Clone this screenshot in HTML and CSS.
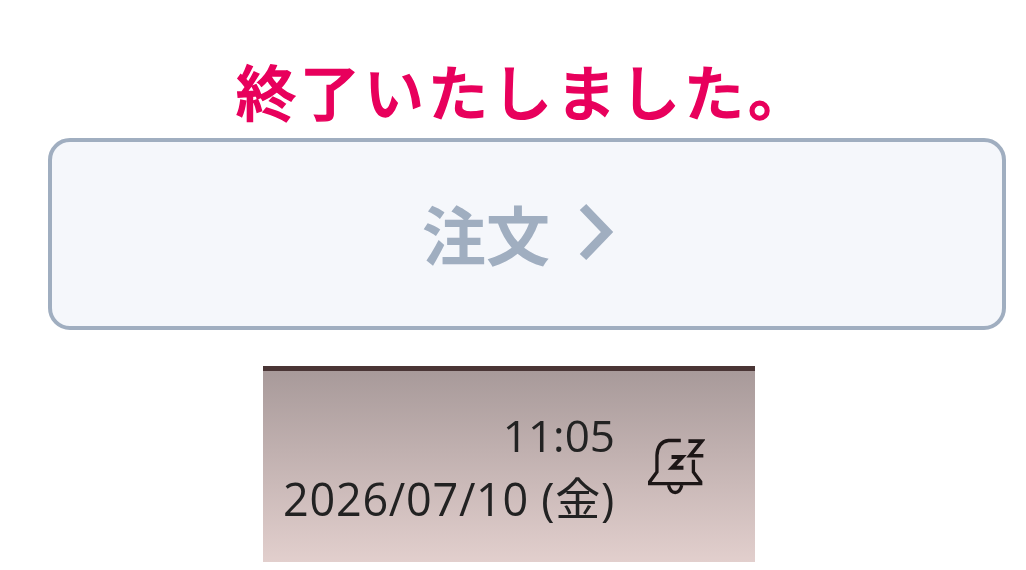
FILE: index.html

```html
<!DOCTYPE html>
<html lang="ja">
<head>
    <meta charset="UTF-8">
    <meta name="viewport" content="width=device-width, initial-scale=1.0">
    <title>注文</title>
    <link rel="stylesheet" href="styles.css">
</head>
<body>
    <p class="closed-msg">終了いたしました。</p>

    <!-- Order button (disabled) -->
    <button class="order-btn" disabled>
        <span class="order-label">注文</span>
        <svg class="chevron" viewBox="0 0 36 60" width="36" height="60" aria-hidden="true">
            <path d="M5 5 L29 30 L5 55" fill="none" stroke="currentColor" stroke-width="9"/>
        </svg>
    </button>

    <!-- Taskbar clock -->
    <div class="taskbar">
        <div class="clock">
            <div class="clock-time">11:05</div>
            <div class="clock-date">2026/07/10 (金)</div>
        </div>
        <svg class="bell" viewBox="20 20 175 180" width="58" height="60" aria-hidden="true">
            <g fill="none" stroke="#1c1616" stroke-width="10">
                <path d="M122 30 H85 Q52 34 50 75 V125 L28 155 V160 H182 V155 L160 125 V88"/>
                <path d="M85 165 Q90 187 105 187 Q120 187 125 165"/>
                <path d="M145 32 H185 L150 76 H190" stroke-width="11"/>
                <path d="M94 80 H126 L96 112 H130" stroke-width="12"/>
            </g>
        </svg>
    </div>
</body>
</html>
```

FILE: styles.css

```css
body {
    margin: 0;
    background: #fff;
    font-family: "Noto Sans CJK JP", "Open Sans", sans-serif;
}
.closed-msg {
    margin: 0 0 0 236px;
    height: 138px;
    padding-top: 51px;
    box-sizing: border-box;
    font-size: 60px;
    line-height: 78px;
    font-weight: 500;
    -webkit-text-stroke: 1.5px #e8005c;
    letter-spacing: 4px;
    color: #e8005c;
    white-space: nowrap;
    filter: blur(0.6px);
}
.order-btn {
    display: flex;
    align-items: center;
    justify-content: center;
    gap: 28px;
    width: 958px;
    height: 192px;
    margin-left: 48px;
    padding: 0 18px 4px 0;
    box-sizing: border-box;
    background: #f5f7fb;
    border: 4px solid #a0aec0;
    border-radius: 22px;
    color: #a0aec0;
    font-family: inherit;
    font-size: 64px;
    font-weight: 700;
}
.order-label {
    filter: blur(0.7px);
}
.chevron {
    display: block;
    filter: blur(0.7px);
}
.taskbar {
    display: flex;
    align-items: flex-start;
    width: 492px;
    height: 196px;
    margin: 36px 0 0 263px;
    box-sizing: border-box;
    border-top: 5px solid #4a3535;
    background: linear-gradient(#a89a9a, #e2cfcd);
    color: #222;
}
.clock {
    width: 352px;
    padding-top: 32px;
    font-family: "Open Sans", "Noto Sans CJK JP", sans-serif;
    font-size: 45px;
    line-height: 64px;
    text-align: right;
    white-space: nowrap;
    filter: blur(0.6px);
}
.clock-time {
    font-size: 44px;
}
.clock-date {
    letter-spacing: 0.7px;
}
.bell {
    display: block;
    margin: 66px 0 0 32px;
}
```
